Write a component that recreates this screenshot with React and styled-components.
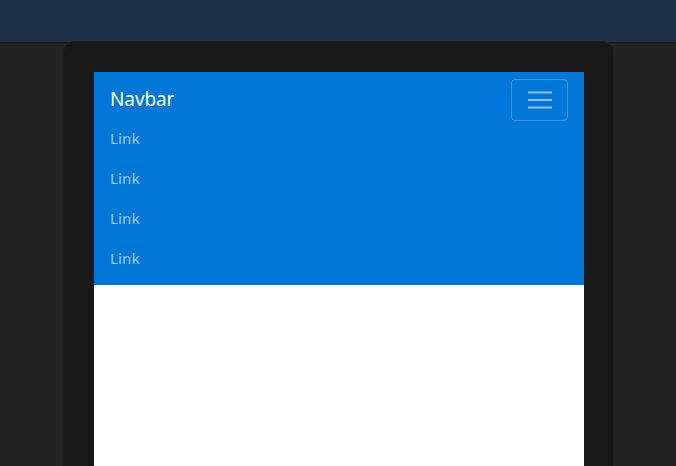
import React from "react";
import styled, { createGlobalStyle } from "styled-components";

const Global = createGlobalStyle`
  html, body { margin: 0; padding: 0; background: #232323; overflow: hidden; }
  body { font-family: "Noto Sans", "Open Sans", sans-serif; }
`;

const Page = styled.div`
  width: 676px;
  height: 466px;
  display: flex;
  flex-direction: column;
  overflow: hidden;
`;

const TopBar = styled.div`
  height: 42px;
  flex: none;
  background: #1b2e44;
  box-shadow: 0 1px 2px rgba(0, 0, 0, 0.35);
`;

const Stage = styled.div`
  display: flex;
  justify-content: center;
  padding-left: 1px;
`;

const Device = styled.div`
  width: 549px;
  box-sizing: border-box;
  padding: 30px 29px 0 30px;
  background: #181818;
  border-radius: 10px 10px 0 0;
  box-shadow: 0 0 0 1px #1f1f1f;
  height: 500px;
`;

const Screen = styled.div`
  background: #ffffff;
  height: 470px;
`;

const Navbar = styled.nav`
  background: #0076d6;
  padding: 7px 16px 7px 16px;
  display: flex;
  flex-direction: column;
`;

const Header = styled.div`
  height: 39px;
  display: flex;
  align-items: flex-start;
  justify-content: space-between;
`;

const Brand = styled.a`
  color: #ffffff;
  font-size: 19px;
  line-height: 40px;
  text-decoration: none;
  letter-spacing: -0.1px;
`;

const Toggler = styled.button`
  width: 57px;
  height: 42px;
  flex: none;
  box-sizing: border-box;
  border: 1px solid rgba(255, 255, 255, 0.22);
  border-radius: 4px;
  background: transparent;
  display: flex;
  align-items: center;
  justify-content: center;
  padding: 0;
`;

const Links = styled.ul`
  list-style: none;
  margin: 0;
  padding: 0;
  display: flex;
  flex-direction: column;
`;

const LinkItem = styled.li`
  height: 40px;
  display: flex;
  align-items: center;
`;

const NavLink = styled.a`
  color: rgba(255, 255, 255, 0.55);
  font-size: 15px;
  font-weight: 500;
  text-decoration: none;
`;

export default function App() {
  return (
    <>
      <Global />
      <Page>
        <TopBar />
        <Stage>
          <Device>
            <Screen>
              <Navbar>
                <Header>
                  <Brand href="#">Navbar</Brand>
                  <Toggler aria-label="Toggle navigation">
                    <svg width="24" height="18" viewBox="0 0 24 18">
                      <g stroke="rgba(255,255,255,0.55)" strokeWidth="2">
                        <line x1="0" y1="1.5" x2="24" y2="1.5" />
                        <line x1="0" y1="9" x2="24" y2="9" />
                        <line x1="0" y1="16.5" x2="24" y2="16.5" />
                      </g>
                    </svg>
                  </Toggler>
                </Header>
                <Links>
                  {["Link", "Link", "Link", "Link"].map((l, i) => (
                    <LinkItem key={i}>
                      <NavLink href="#">{l}</NavLink>
                    </LinkItem>
                  ))}
                </Links>
              </Navbar>
            </Screen>
          </Device>
        </Stage>
      </Page>
    </>
  );
}
